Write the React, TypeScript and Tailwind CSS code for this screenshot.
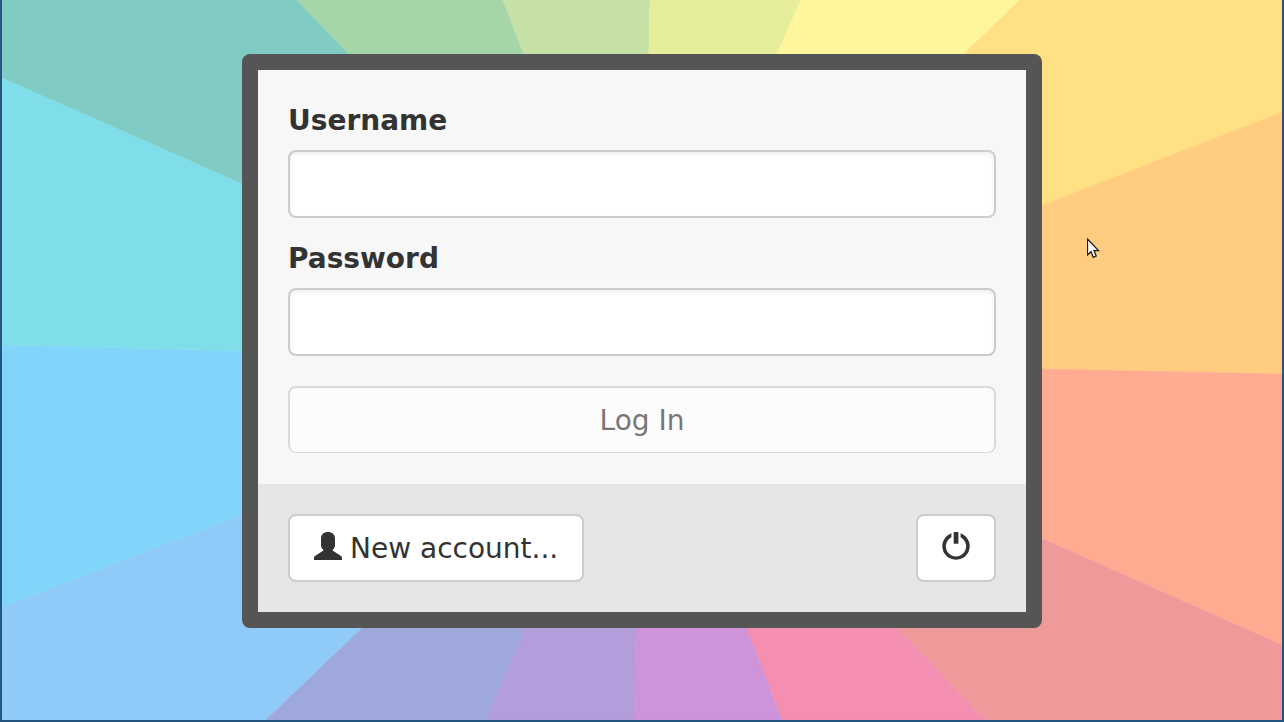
import { useState } from "react";
import type { ReactNode } from "react";

const rays: { fill: string; points: string }[] = [
  { fill: "#80cbc4", points: "642,361 2,78 2,0 297,0" },
  { fill: "#a5d6a7", points: "642,361 297,0 503,0" },
  { fill: "#c5e1a5", points: "642,361 503,0 650,0" },
  { fill: "#e6ee9c", points: "642,361 650,0 801,0" },
  { fill: "#fff59d", points: "642,361 801,0 1020,0" },
  { fill: "#ffe082", points: "642,361 1020,0 1282,0 1282,112" },
  { fill: "#ffcc80", points: "642,361 1282,112 1282,374" },
  { fill: "#ffab91", points: "642,361 1282,374 1282,645" },
  { fill: "#ef9a9a", points: "642,361 1282,645 1282,720 985,720" },
  { fill: "#f48fb1", points: "642,361 985,720 782,720" },
  { fill: "#ce93d8", points: "642,361 782,720 634,720" },
  { fill: "#b39ddb", points: "642,361 634,720 485,720" },
  { fill: "#9fa8da", points: "642,361 485,720 265,720" },
  { fill: "#90caf9", points: "642,361 265,720 2,720 2,607" },
  { fill: "#81d4fa", points: "642,361 2,607 2,345" },
  { fill: "#80deea", points: "642,361 2,345 2,78" },
];

function Wallpaper() {
  return (
    <svg
      className="absolute inset-0 h-full w-full"
      viewBox="2 0 1280 720"
      preserveAspectRatio="none"
      aria-hidden="true"
    >
      {rays.map((ray) => (
        <polygon
          key={ray.fill}
          points={ray.points}
          fill={ray.fill}
          stroke={ray.fill}
          strokeWidth="0.5"
        />
      ))}
    </svg>
  );
}

function UserIcon() {
  return (
    <svg className="mb-1.5 size-7" viewBox="0 0 28 28" fill="currentColor" aria-hidden="true">
      <path d="M14 0C9.800 0 7 2.600 7 6.500V13c0 2 .7 3.300 1.800 4.200.7.600.6 1.400-.1 1.800L1.300 23.700C.4 24.300 0 24.900 0 26v2h28v-2c0-1.100-.4-1.700-1.300-2.300L19.300 19c-.7-.4-.8-1.200-.1-1.800C20.300 16.300 21 15 21 13V6.500C21 2.600 18.200 0 14 0z" />
    </svg>
  );
}

function PowerIcon() {
  return (
    <svg className="mb-1.5 size-7" viewBox="0 0 28 28" fill="currentColor" aria-hidden="true">
      <path d="M9.400 1.200A13.700 13.700 0 1 0 18.600 1.200V5.300A10.100 10.100 0 1 1 9.400 5.300z" />
      <rect x="11.700" y="0" width="4.700" height="11.700" rx="0.5" />
    </svg>
  );
}

function Pointer() {
  return (
    <svg
      className="pointer-events-none absolute left-[1085px] top-[238px] h-[22px] w-[14px]"
      viewBox="0 0 14 22"
      aria-hidden="true"
    >
      <path
        d="M.5 1V17L4 13.700 6.300 19.300 9.200 18 7 12.600H11.500z"
        fill="#fff"
        stroke="#1c1c24"
        strokeWidth="1.300"
      />
    </svg>
  );
}

type FieldProps = {
  id: string;
  label: string;
  type: "text" | "password";
  value: string;
  onChange: (value: string) => void;
};

function Field({ id, label, type, value, onChange }: FieldProps) {
  return (
    <div className="flex flex-col gap-2">
      <label htmlFor={id} className="font-bold">
        {label}
      </label>
      <input
        id={id}
        type={type}
        value={value}
        onChange={(event) => onChange(event.target.value)}
        className="h-[68px] w-full rounded-lg border-2 border-[#ccc] bg-white px-6 shadow-[inset_0_2px_4px_rgba(0,0,0,0.075)] outline-none focus:border-[#66afe9]"
      />
    </div>
  );
}

function FooterButton({ label, children }: { label?: string; children: ReactNode }) {
  return (
    <button
      type="button"
      aria-label={label}
      className="flex h-[68px] items-center gap-2 rounded-lg border-2 border-[#ccc] bg-white px-6 pt-0.5 hover:bg-[#e6e6e6]"
    >
      {children}
    </button>
  );
}

export default function App() {
  const [username, setUsername] = useState("");
  const [password, setPassword] = useState("");

  return (
    <div className="relative min-h-screen border-x-2 border-b-2 border-[#265480] pt-[54px] font-['DejaVu_Sans',sans-serif] text-[28px] leading-[42px] text-[#333]">
      <Wallpaper />
      <main className="relative mx-auto w-full max-w-[800px] rounded-lg bg-[#555] p-4">
        <form onSubmit={(event) => event.preventDefault()}>
          <div className="flex flex-col gap-5 bg-[#f7f7f7] p-[30px]">
            <Field id="username" label="Username" type="text" value={username} onChange={setUsername} />
            <Field id="password" label="Password" type="password" value={password} onChange={setPassword} />
            <button
              type="submit"
              disabled={!username || !password}
              className="mt-2.5 mb-px h-[67px] w-full rounded-lg border-2 border-b border-[#ccc] bg-white pt-0.5 disabled:opacity-65"
            >
              Log In
            </button>
          </div>
          <div className="flex items-center justify-between bg-[#e6e6e6] p-[30px]">
            <FooterButton>
              <UserIcon />
              <span>New account...</span>
            </FooterButton>
            <FooterButton label="Power">
              <PowerIcon />
            </FooterButton>
          </div>
        </form>
      </main>
      <Pointer />
    </div>
  );
}
